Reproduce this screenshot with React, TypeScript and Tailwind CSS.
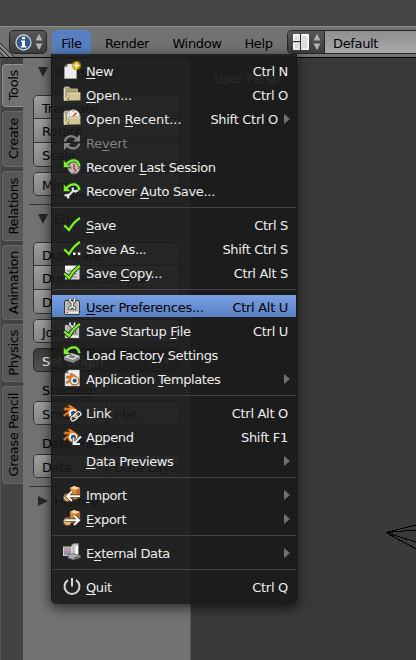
import React from 'react';

type IconName =
  | 'new' | 'open' | 'recent' | 'revert' | 'session' | 'autosave' | 'save' | 'saveAs' | 'saveCopy'
  | 'prefs' | 'startup' | 'factory' | 'template' | 'link' | 'append' | 'import' | 'export' | 'external' | 'quit';

const Check = () => (
  <g fill="none" strokeLinejoin="miter">
    <path d="M2 10 L7 15.2 C10 10 13 6 18 3" stroke="#17350a" strokeWidth="3.8" />
    <path d="M2.2 10.2 L7 15 C10 10 13 6 18 3" stroke="#82ed2d" strokeWidth="2.3" />
  </g>
);

const GreenArrow = () => (
  <g>
    <path d="M17.6 9.6 C16.5 2.6 10.5 .8 5.5 5.6" fill="none" stroke="#1d4a0b" strokeWidth="3.4" />
    <path d="M1.5 3 V10.5 H9 Z" fill="#82ed35" stroke="#1d4a0b" strokeWidth=".7" />
    <path d="M17.4 9.2 C16.3 2.8 10.5 1 4.5 7" fill="none" stroke="#82ed35" strokeWidth="2.3" />
  </g>
);

const Blender = () => (
  <g>
    <path d="M2 4.8 H8 L5.5 2.6 L8 1.8 L15 6.5 C19 10 16 16 10.8 15.5 C7.5 15.3 5.6 13 6 10.8 L2.5 13.5 L1 12.3 L7 7.3 H2 Z" fill="#ef8a2b" stroke="#803c0c" strokeWidth=".7" />
    <circle cx="11.2" cy="10.2" r="4" fill="#f5f5f5" />
    <circle cx="11.4" cy="10.2" r="2.5" fill="#1d5792" />
  </g>
);

const Prefs = () => (
  <g>
    <rect x="2.5" y="3.5" width="15" height="14" rx="1.5" fill="#c8c8c8" stroke="#383838" />
    <rect x="4.5" y="4.5" width="11" height="9.5" fill="#b2b2b2" />
    <path d="M3.5 15.8 H16.5" stroke="#eee" strokeWidth="1.5" />
    <path d="M4 15.5 H6.5" stroke="#e16350" />
    <path d="M8 1.5 V4 L10.3 6 L12.6 4 V1.5 M10.3 6 V9.5 M8 13 V11 L10.3 9.5 L12.6 11 V13" fill="none" stroke="#303030" strokeWidth="3" />
    <path d="M8 1.5 V4 L10.3 6 L12.6 4 V1.5 M10.3 6 V9.5 M8 12.6 V11 L10.3 9.5 L12.6 11 V12.6" fill="none" stroke="#f4f4f4" strokeWidth="1.6" />
  </g>
);

const Crate = () => (
  <g>
    <path d="M8 3 L12 1 L18 3 V12 L13 15 L8 12 Z" fill="#d88b3c" stroke="#704016" strokeWidth=".7" />
    <path d="M8 3 L12 1 L18 3 L14 5 Z" fill="#ffd49c" />
    <path d="M14 5 L18 3 V12 L14 14 Z" fill="#b96b27" />
    <circle cx="5.5" cy="12.5" r="4" fill="#f1b776" stroke="#754a20" strokeWidth=".7" />
  </g>
);

function Drawing({ name }: { name: IconName }) {
  switch (name) {
    case 'new':
      return (
        <>
          <path d="M5.5 3 H14.5 V17.5 H2.5 V6 Z" fill="#ededed" stroke="#b0b0b0" strokeWidth=".5" />
          <path d="M5.5 3 V6 H2.5 Z" fill="#777" />
          <circle cx="14.5" cy="4.5" r="4.8" fill="#c08c00" opacity=".65" />
          <circle cx="14.5" cy="4.5" r="3.4" fill="#d9a400" />
          <path d="M14.5 1.5 V7.5 M11.5 4.5 H17.5" stroke="#fffbe0" strokeWidth="1.5" />
        </>
      );
    case 'open':
    case 'recent':
      return (
        <>
          <path d="M2 15.5 V3.5 L3 2 H7 L8 4 H15.5 V15 Z" fill="#a99c73" stroke="#e6dfbd" strokeWidth=".7" />
          {name === 'recent' && (
            <>
              <path d="M4.5 9 V7 C5 -1.5 17.5 -1.5 18 7 V9 Z" fill="#f0f0f0" stroke="#777" strokeWidth=".6" />
              <path d="M10.5 8 L14.5 3.8" stroke="#e03020" strokeWidth="1.3" />
              <path d="M7 4.5 L8.2 5.5 M11.3 1.5 V3.2" stroke="#555" strokeWidth=".8" />
            </>
          )}
          <path d="M6.5 15.5 V7.5 H18.5 V15.5 Z" fill="#d3c695" stroke="#5a5236" strokeWidth=".5" />
          <path d="M2.8 3.5 V15 L6 12 V7.5" stroke="#f4eed3" fill="none" />
          <path d="M6.8 8 H18.2" stroke="#eee5c2" />
        </>
      );
    case 'revert':
      return (
        <g fill="#858585">
          <path d="M2.8 8.5 C4 3 10.5 1.5 14.5 5.5 M17.2 10.5 C16 16 9.5 17 5.5 13" fill="none" stroke="#858585" strokeWidth="2.3" />
          <path d="M18 1.5 V8.5 H11 Z M2 17 V10 H9 Z" />
        </g>
      );
    case 'session':
      return (
        <>
          <circle cx="12" cy="11" r="6" fill="#bdbdbd" stroke="#666" />
          <path d="M12 7 V11.5 L14.5 14.5" fill="none" stroke="#dc3025" strokeWidth="1.5" />
          <path d="M8 11.5 H9.2 M15.5 11 H17 M12 14.5 V16" stroke="#555" />
          <GreenArrow />
        </>
      );
    case 'autosave':
      return (
        <>
          <path d="M5.5 15.5 L12 9 M10.5 6.5 L11 9.5 L13.5 10.5 L16.5 9 M2.5 14.5 L5.5 14 L6.5 17.5" fill="none" stroke="#e6e6e6" strokeWidth="2.2" />
          <GreenArrow />
        </>
      );
    case 'save':
      return <Check />;
    case 'saveAs':
      return (
        <>
          <Check />
          <path d="M11 13.5 H13.5 V16 H11 Z M15.8 13.5 H18.3 V16 H15.8 Z" fill="#fff" />
        </>
      );
    case 'saveCopy':
      return (
        <>
          <path d="M3 2.5 H17.5 V16.5 H3 Z" fill="#d8d8d8" />
          <path d="M3 3 H17 V6 H3 Z" fill="#fff" />
          <path d="M5 8 H15 M5 11 H15 M5 14 H15" stroke="#777" />
          <Check />
        </>
      );
    case 'prefs':
      return <Prefs />;
    case 'startup':
      return <><Prefs /><Check /></>;
    case 'factory':
      return (
        <>
          <path d="M2 12 L9 8 L18 11 V14 L11 18 L2 15 Z" fill="#858585" />
          <path d="M2 12 L9 8 L18 11 L11 15 Z" fill="#d0d0d0" />
          <path d="M6 12 L9 10 L14 11.5 L11 13.3 Z" fill="#777" />
          <g transform="translate(0 -1)"><GreenArrow /></g>
        </>
      );
    case 'template':
      return (
        <>
          <path d="M6.5 1 H17.5 V17 H3 V4.5 Z" fill="#eee" stroke="#aaa" strokeWidth=".5" />
          <path d="M6.5 1 V4.5 H3 Z" fill="#777" />
          <g transform="translate(3 3) scale(.85)"><Blender /></g>
        </>
      );
    case 'link':
      return (
        <>
          <Blender />
          <g fill="none">
            <rect x="8.5" y="12.7" width="7" height="4.4" rx="2.2" transform="rotate(-35 12 14.9)" stroke="#222" strokeWidth="2.8" />
            <rect x="12" y="9.5" width="7" height="4.4" rx="2.2" transform="rotate(-35 15.5 11.7)" stroke="#222" strokeWidth="2.8" />
            <rect x="8.5" y="12.7" width="7" height="4.4" rx="2.2" transform="rotate(-35 12 14.9)" stroke="#e2e2e2" strokeWidth="1.4" />
            <rect x="12" y="9.5" width="7" height="4.4" rx="2.2" transform="rotate(-35 15.5 11.7)" stroke="#e2e2e2" strokeWidth="1.4" />
          </g>
        </>
      );
    case 'append':
      return (
        <>
          <Blender />
          <path d="M19 9.5 L12 16.5 M11.5 10.5 V17 H18" fill="none" stroke="#333" strokeWidth="3.2" />
          <path d="M19 9.5 L12 16.5 M11.5 10.5 V17 H18" fill="none" stroke="#eee" strokeWidth="1.8" />
        </>
      );
    case 'import':
      return (
        <>
          <Crate />
          <path d="M18 11.2 H5 M10 6.5 L5 11.2 L10 16" fill="none" stroke="#4b3017" strokeWidth="3.4" />
          <path d="M18 11.2 H5 M10 6.5 L5 11.2 L10 16" fill="none" stroke="#fff" strokeWidth="2" />
        </>
      );
    case 'export':
      return (
        <>
          <Crate />
          <path d="M3 11.2 H17 M12 6.5 L17 11.2 L12 16" fill="none" stroke="#4b3017" strokeWidth="3.4" />
          <path d="M3 11.2 H17 M12 6.5 L17 11.2 L12 16" fill="none" stroke="#fff" strokeWidth="2" />
        </>
      );
    case 'external':
      return (
        <>
          <path d="M9.5 2 L12 .5 H16.5 V12 L13 14 H9.5 Z" fill="#c4c4c4" stroke="#777" strokeWidth=".6" />
          <path d="M13.5 3 H16 V11 H13.5 Z" fill="#fff" />
          <rect x="1.5" y="4" width="8" height="8.5" fill="#9292ad" stroke="#cfcfcf" />
          <path d="M2 5 H9 V8 H2 Z" fill="#c99aa2" />
          <path d="M6 12 L11 10.5 L18.5 12.5 V14.5 L12 17 L6 15 Z" fill="#a9a9a9" stroke="#444" strokeWidth=".5" />
          <path d="M12 14.5 V16.8 L18.5 14.5 V12.5 Z" fill="#666" />
          <path d="M16.5 14 H18" stroke="#35d32c" strokeWidth="1.5" />
        </>
      );
    case 'quit':
      return (
        <g fill="none" stroke="#d8d8d8" strokeWidth="2">
          <path d="M6 3.2 A7.5 7.5 0 1 0 14 3.2" />
          <path d="M10 1 V9.5" />
        </g>
      );
  }
}

type Item = { icon?: IconName; label: string; u?: number; keys?: string; sub?: boolean; off?: boolean; active?: boolean; track?: string };

const groups: Item[][] = [
  [
    { icon: 'new', label: 'New', u: 0, keys: 'Ctrl N' },
    { icon: 'open', label: 'Open...', u: 0, keys: 'Ctrl O', track: 'tracking-[-0.15px]' },
    { icon: 'recent', label: 'Open Recent...', u: 5, keys: 'Shift Ctrl O', sub: true, track: 'tracking-[-0.05px]' },
    { icon: 'revert', label: 'Revert', u: 2, off: true, track: 'tracking-[-0.2px]' },
    { icon: 'session', label: 'Recover Last Session', u: 8 },
    { icon: 'autosave', label: 'Recover Auto Save...', u: 8, track: 'tracking-[-0.32px]' },
  ],
  [
    { icon: 'save', label: 'Save', u: 0, keys: 'Ctrl S', track: 'tracking-[-0.55px]' },
    { icon: 'saveAs', label: 'Save As...', keys: 'Shift Ctrl S' },
    { icon: 'saveCopy', label: 'Save Copy...', u: 5, keys: 'Ctrl Alt S', track: 'tracking-[-0.3px]' },
  ],
  [
    { icon: 'prefs', label: 'User Preferences...', u: 0, keys: 'Ctrl Alt U', active: true, track: 'tracking-[-0.27px]' },
    { icon: 'startup', label: 'Save Startup File', u: 13, keys: 'Ctrl U', track: 'tracking-[-0.32px]' },
    { icon: 'factory', label: 'Load Factory Settings', u: 10 },
    { icon: 'template', label: 'Application Templates', u: 12, sub: true },
  ],
  [
    { icon: 'link', label: 'Link', keys: 'Ctrl Alt O' },
    { icon: 'append', label: 'Append', u: 1, keys: 'Shift F1' },
    { label: 'Data Previews', u: 0, sub: true },
  ],
  [
    { icon: 'import', label: 'Import', u: 0, sub: true },
    { icon: 'export', label: 'Export', u: 0, sub: true },
  ],
  [{ icon: 'external', label: 'External Data', u: 1, sub: true }],
  [{ icon: 'quit', label: 'Quit', u: 0, keys: 'Ctrl Q' }],
];

function Label({ text, u, track = 'tracking-[-0.4px]' }: { text: string; u?: number; track?: string }) {
  if (u === undefined) return <span className={track}>{text}</span>;
  return (
    <span className={track}>
      {text.slice(0, u)}
      <span className="underline decoration-1 underline-offset-[2px] [text-decoration-skip-ink:none]">{text[u]}</span>
      {text.slice(u + 1)}
    </span>
  );
}

function MenuRow({ item }: { item: Item }) {
  const tone = item.active ? 'bg-linear-to-b from-[#7ba0e4] to-[#5680c2] text-black' : item.off ? 'text-[#818181]' : 'text-[#eeeeee]';
  return (
    <div className="h-6">
      <div className={`flex h-[22px] items-center pl-[10px] ${item.sub ? 'pr-[6px]' : 'pr-[8px]'} ${tone}`}>
        <div className="mr-1 h-5 w-5 shrink-0">
          {item.icon && <svg className="mt-px block h-5 w-5" viewBox="0 0 20 20"><Drawing name={item.icon} /></svg>}
        </div>
        <div className="flex grow justify-between pt-1">
          <Label text={item.label} u={item.u} track={item.track} />
          <span className="tracking-[-0.3px]">{item.keys}</span>
        </div>
        {item.sub && (
          <svg className="mt-[2px] ml-[6px] h-[10px] w-[6px] shrink-0" viewBox="0 0 6 10"><path d="M0 0 L6 5 L0 10 Z" fill="#707070" /></svg>
        )}
      </div>
    </div>
  );
}

function FileMenu() {
  return (
    <div className="absolute top-[54px] left-[51px] h-[550px] w-[246px] rounded-b-[5px] border-x border-[#151515]/80 bg-[#191919]/90 pt-[5px] shadow-[0_3px_12px_1px_rgba(0,0,0,0.6)]">
      {groups.map((g, i) => (
        <React.Fragment key={i}>
          {i > 0 && <div className="mt-1 mb-[5px] h-px bg-[#424242]" />}
          {g.map((it) => <MenuRow key={it.label} item={it} />)}
        </React.Fragment>
      ))}
    </div>
  );
}

const Updown = () => (
  <svg className="h-[18px] w-[8px]" viewBox="0 0 8 18"><path d="M.5 7.5 L4 .8 L7.5 7.5 Z M.5 10.5 L4 17.2 L7.5 10.5 Z" fill="#b0b0b0" /></svg>
);

function Header() {
  return (
    <header className="flex h-[31px] items-start border-t border-[#8c8c8c] bg-[#727272] pt-[3px]">
      <svg className="mt-[13px] -mr-[14px] h-[14px] w-[14px] shrink-0" viewBox="0 0 14 14" fill="none">
        <path d="M0 0 L14 14 M0 5 L9 14 M0 10 L4 14" stroke="#222" />
        <path d="M0 1.5 L12.5 14 M0 6.5 L7.5 14" stroke="#aaa" />
      </svg>
      <div className="ml-[9px] flex h-6 w-[38px] items-center justify-between rounded-[5px] border border-[#262626] bg-linear-to-b from-[#575757] to-[#3c3c3c] pr-[3px] pl-[5px]">
        <svg className="h-[17px] w-[17px]" viewBox="0 0 17 17">
          <circle cx="8.5" cy="8.5" r="7.5" fill="#345889" stroke="#c5ced8" strokeWidth="1.3" />
          <path d="M7 3 H10 V5.2 H7 Z M6 6.5 H10 V12 H11.3 V13.5 H5.7 V12 H7 V8 H6 Z" fill="white" />
        </svg>
        <Updown />
      </div>
      <nav className="flex h-6 text-black">
        <div className="ml-[5px] flex w-[39px] justify-center rounded-t-[5px] bg-[#5680c2] pt-[6px]">File</div>
        <div className="w-[72px] pt-[6px] text-center">Render</div>
        <div className="w-[68px] pt-[6px] text-center">Window</div>
        <div className="w-[55px] pt-[6px] text-center">Help</div>
      </nav>
      <div className="ml-px flex h-6 grow overflow-hidden rounded-l-[5px] border border-r-0 border-[#262626]">
        <div className="flex w-[37px] items-center justify-between border-r border-[#262626] bg-linear-to-b from-[#575757] to-[#3c3c3c] pr-[3px] pl-[5px]">
          <svg className="h-4 w-4" viewBox="0 0 16 16">
            <rect width="16" height="16" rx="1" fill="#fff" />
            <path d="M1.5 1.5 H6 V6.5 H1.5 Z M1.5 9 H6 V14.5 H1.5 Z M9 1.5 H14.5 V14.5 H9 Z" fill="#dedede" />
            <path d="M7.5 0 V16 M0 7.7 H7" stroke="#292929" strokeWidth="1.2" />
          </svg>
          <Updown />
        </div>
        <div className="grow bg-linear-to-b from-[#8f8f8f] to-[#a8a8a8] pt-[5px] pl-2 text-black">Default</div>
      </div>
    </header>
  );
}

const tabs = [
  { name: 'Tools', size: 'h-[43px] bg-[#727272] border-[#929292]' },
  { name: 'Create', size: 'h-[56px] bg-[#575757] border-[#686868]' },
  { name: 'Relations', size: 'h-[70px] bg-[#575757] border-[#686868]' },
  { name: 'Animation', size: 'h-[75px] bg-[#575757] border-[#686868]' },
  { name: 'Physics', size: 'h-[58px] bg-[#575757] border-[#686868]' },
  { name: 'Grease Pencil', size: 'h-[98px] bg-[#575757] border-[#686868]' },
];

function TabStrip() {
  return (
    <aside className="flex w-[23px] flex-col gap-[4px] bg-[#434343] pt-[6px] pl-[2px] shadow-[inset_1px_0_#555]">
      {tabs.map((t) => (
        <div key={t.name} className={`flex w-[21px] items-center justify-center rounded-l-[4px] border border-r-0 pl-[2px] ${t.size}`}>
          <span className="rotate-180 text-black [writing-mode:vertical-rl]">{t.name}</span>
        </div>
      ))}
    </aside>
  );
}

function Title({ name, closed }: { name: string; closed?: boolean }) {
  return (
    <div className="flex h-6 items-center pl-[15px]">
      <svg className="h-[10px] w-[10px]" viewBox="0 0 10 10"><path d={closed ? 'M0 0 L10 5 L0 10 Z' : 'M0 0 H10 L5 10 Z'} fill="#262626" /></svg>
      <span className="mt-[2px] ml-[6px] text-black">{name}</span>
      <div className="mr-[12px] ml-auto h-[6px] w-[12px] bg-[radial-gradient(#222_0.8px,transparent_1px)] bg-size-[3px_3px]" />
    </div>
  );
}

const cell = 'flex items-center px-2 pt-[3px] bg-linear-to-b from-[#a0a0a0] to-[#858585] text-black';

function Stack({ items }: { items: string[] }) {
  return (
    <div className={`mx-[10px] grid auto-rows-fr divide-y divide-[#333] overflow-hidden rounded-[5px] border border-[#333] ${items.length > 1 ? 'h-[72px]' : 'h-6'}`}>
      {items.map((s) => <div key={s} className={cell}>{s}</div>)}
    </div>
  );
}

function Pair({ a, b }: { a: string; b: string }) {
  return (
    <div className="mx-[10px] grid h-6 grid-cols-2 divide-x divide-[#333] overflow-hidden rounded-[5px] border border-[#333] whitespace-nowrap">
      <div className={cell}>{a}</div><div className={cell}>{b}</div>
    </div>
  );
}

function ToolPanel() {
  return (
    <section className="flex w-[168px] flex-col border-r border-[#555] bg-[#727272] pt-px">
      <div className="pt-px"><Title name="Transform" /></div>
      <div className="mt-[11px]"><Stack items={['Translate', 'Rotate', 'Scale']} /></div>
      <div className="mt-[5px]"><Stack items={['Mirror']} /></div>
      <div className="mx-[6px] mt-2 h-px bg-[#333]" />
      <div className="pt-[2px]"><Title name="Edit" /></div>
      <div className="mt-[11px]"><Stack items={['Duplicate', 'Duplicate Linked', 'Delete']} /></div>
      <div className="mt-[5px]"><Stack items={['Join']} /></div>
      <div className="mx-[10px] mt-[5px] flex h-6 items-center justify-between rounded-[5px] border border-[#262626] bg-linear-to-b from-[#3c3c3c] to-[#535353] px-2 pt-[3px] text-white">
        Set Origin
        <svg className="h-2 w-2" viewBox="0 0 8 8"><path d="M0 0 H8 L4 8 Z" fill="#aaa" /></svg>
      </div>
      <div className="h-[29px] pt-[11px] pl-[19px] text-black">Shading:</div>
      <Pair a="Smooth" b="Flat" />
      <div className="h-[29px] pt-[11px] pl-[19px] text-black">Data Transfer:</div>
      <Pair a="Data" b="Data Layo" />
      <div className="mx-[6px] mt-2 h-px bg-[#333]" />
      <div className="mt-[2px]"><Title name="History" closed /></div>
    </section>
  );
}

export default function App() {
  return (
    <div className="relative flex h-[660px] w-[416px] flex-col overflow-hidden bg-[#393939] font-['DejaVu_Sans',sans-serif] text-[13px] leading-4 tracking-[-0.35px]">
      <div className="h-[26px] shrink-0 bg-[#444444]" />
      <Header />
      <main className="flex min-h-0 grow border-t border-black">
        <TabStrip />
        <ToolPanel />
        <div className="grow pt-[13px] pl-[23px] text-[#ccc]">
          User Persp
          <svg className="mt-[435px] ml-[172px] block h-[30px] w-[30px]" viewBox="0 0 30 30" fill="none" stroke="black" shapeRendering="crispEdges">
            <path d="M0 10.5 L30 3 M0 10.5 L7 9.5 L30 8.5 M0 10.5 L30 20 M0 10.5 L30 27 M1 10.5 H7" />
          </svg>
        </div>
      </main>
      <FileMenu />
    </div>
  );
}
